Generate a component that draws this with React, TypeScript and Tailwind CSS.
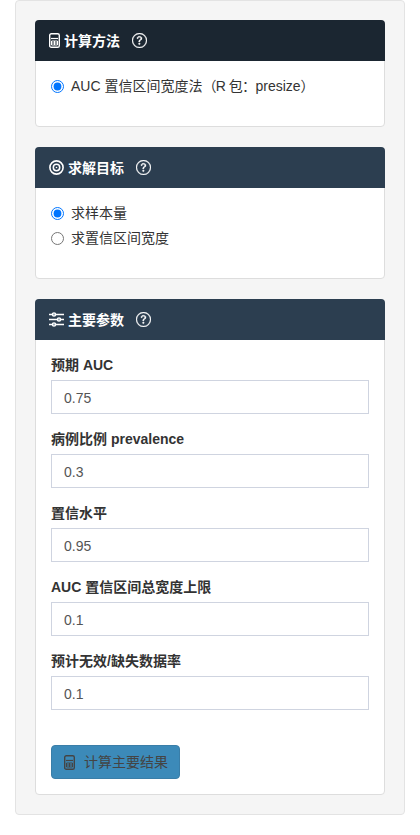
import { BsQuestionCircle } from 'react-icons/bs'
import type { ReactNode } from 'react'

const PARAMS = [
  { label: '预期 AUC', value: '0.75' },
  { label: '病例比例 prevalence', value: '0.3' },
  { label: '置信水平', value: '0.95' },
  { label: 'AUC 置信区间总宽度上限', value: '0.1' },
  { label: '预计无效/缺失数据率', value: '0.1' },
]

function CalculatorIcon({ className }: { className: string }) {
  return (
    <svg viewBox="0 0 11 15" className={className} fill="none" stroke="currentColor">
      <rect x="0.7" y="0.7" width="9.6" height="13.6" rx="1.6" strokeWidth="1.4" />
      <path d="M2 5.5h7" strokeWidth="1.2" />
      <path d="M2.5 8h6v4h-6zM2.5 10h6M5.5 8v4" strokeWidth="1" />
    </svg>
  )
}

function BullseyeIcon() {
  return (
    <svg viewBox="0 0 15 15" className="mr-1 h-[15px] w-[15px]" fill="none" stroke="currentColor">
      <circle cx="7.5" cy="7.5" r="6.6" strokeWidth="1.6" />
      <circle cx="7.5" cy="7.5" r="3.2" strokeWidth="1.5" />
      <circle cx="7.5" cy="7.5" r="0.8" fill="currentColor" strokeWidth="0" />
    </svg>
  )
}

function SlidersIcon() {
  return (
    <svg viewBox="0 0 15 15" className="mr-1 h-[15px] w-[15px]" fill="none" stroke="currentColor" strokeWidth="1.4">
      <path d="M0 2.5h15M0 7.5h15M0 12.5h15" />
      <circle cx="5" cy="2.5" r="1.6" className="fill-[#8fa0b0]" />
      <circle cx="10" cy="7.5" r="1.6" className="fill-[#8fa0b0]" />
      <circle cx="5" cy="12.5" r="1.6" className="fill-[#8fa0b0]" />
    </svg>
  )
}

interface CardProps {
  icon: ReactNode
  title: string
  headerClass: string
  children: ReactNode
}

function Card({ icon, title, headerClass, children }: CardProps) {
  return (
    <section className="rounded-[4px] border border-[#dddddd] bg-white">
      <div className={`-mx-px -mt-px flex h-[41px] items-center rounded-t-[4px] px-[14px] text-white ${headerClass}`}>
        {icon}
        <h2 className="text-[14px] font-bold leading-5">{title}</h2>
        <BsQuestionCircle className="ml-3 h-[15px] w-[15px]" stroke="currentColor" strokeWidth={0.35} />
      </div>
      {children}
    </section>
  )
}

function Radio({ name, label, checked }: { name: string; label: ReactNode; checked?: boolean }) {
  return (
    <label className="flex h-[25px] items-center text-[14px] text-[#333333]">
      <input type="radio" name={name} defaultChecked={checked} className="m-0 h-[13px] w-[13px]" />
      <span className="ml-[7px]">{label}</span>
    </label>
  )
}

export default function App() {
  return (
    <div className="min-h-[835px] bg-white px-[15px] font-['Liberation_Sans','Noto_Sans_CJK_SC',sans-serif]">
      <div className="flex flex-col gap-5 rounded-[4px] border border-[#e3e3e3] bg-[#f5f5f5] p-[19px]">
        <Card title="计算方法" headerClass="bg-[#1b2631]" icon={<CalculatorIcon className="mr-1 h-[15px] w-[11px]" />}>
          <div className="h-[65px] pl-[15px] pt-[13px]">
            <Radio
              name="method"
              label={
                <>
                  AUC 置信区间宽度法<span className="tracking-[-0.6px]">（R 包：</span>presize）
                </>
              }
              checked
            />
          </div>
        </Card>

        <Card title="求解目标" headerClass="bg-[#2c3e50]" icon={<BullseyeIcon />}>
          <div className="h-[90px] pl-[15px] pt-[13px]">
            <Radio name="goal" label="求样本量" checked />
            <Radio name="goal" label="求置信区间宽度" />
          </div>
        </Card>

        <Card title="主要参数" headerClass="bg-[#2c3e50]" icon={<SlidersIcon />}>
          <div className="p-[15px]">
            <div className="flex flex-col gap-[15px]">
              {PARAMS.map((param) => (
                <div key={param.label}>
                  <label className="mb-[5px] block text-[14px] font-bold leading-5 text-[#333333]">{param.label}</label>
                  <input
                    type="text"
                    defaultValue={param.value}
                    className="block h-[34px] w-full border border-[#cfd4e0] bg-white px-3 pt-px text-[14px] text-[#555555] outline-none"
                  />
                </div>
              ))}
            </div>
            <button
              type="button"
              className="mt-[35px] flex h-[34px] w-[129px] items-center rounded-[4px] border border-[#3a7ea8] bg-[#3c8ab9] pl-3 text-[14px] text-[#444444]"
            >
              <CalculatorIcon className="mr-[9px] h-[15px] w-[11px]" />
              计算主要结果
            </button>
          </div>
        </Card>
      </div>
    </div>
  )
}
